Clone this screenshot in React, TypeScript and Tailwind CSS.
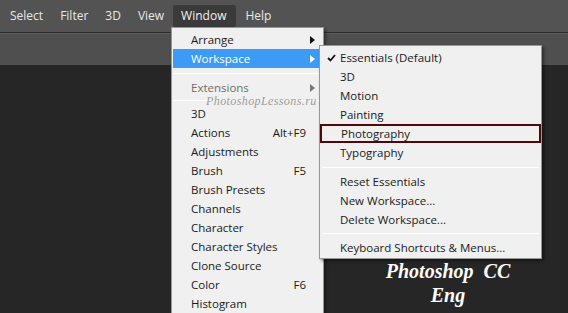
import React from 'react';

const font = { fontFamily: '"Open Sans", "Noto Sans", sans-serif' };

type Item = { label: string; shortcut?: string; arrow?: boolean; active?: boolean; disabled?: boolean; sep?: number };

const windowItems: Item[] = [
  { label: 'Arrange', arrow: true },
  { label: 'Workspace', arrow: true, active: true },
  { label: '', sep: 10 },
  { label: 'Extensions', arrow: true, disabled: true },
  { label: '', sep: 7 },
  { label: '3D' },
  { label: 'Actions', shortcut: 'Alt+F9' },
  { label: 'Adjustments' },
  { label: 'Brush', shortcut: 'F5' },
  { label: 'Brush Presets' },
  { label: 'Channels' },
  { label: 'Character' },
  { label: 'Character Styles' },
  { label: 'Clone Source' },
  { label: 'Color', shortcut: 'F6' },
  { label: 'Histogram' },
];

const workspaceItems: (Item & { checked?: boolean; boxed?: boolean })[] = [
  { label: 'Essentials (Default)', checked: true },
  { label: '3D' },
  { label: 'Motion' },
  { label: 'Painting' },
  { label: 'Photography', boxed: true },
  { label: 'Typography' },
  { label: '', sep: 10 },
  { label: 'Reset Essentials' },
  { label: 'New Workspace...' },
  { label: 'Delete Workspace...' },
  { label: '', sep: 9 },
  { label: 'Keyboard Shortcuts & Menus...' },
];

function Arrow({ color }: { color: string }) {
  return (
    <svg width="5" height="8" viewBox="0 0 5 8" className="absolute right-[7px] top-[6px]">
      <path d="M0 0 L5 4 L0 8 Z" fill={color} />
    </svg>
  );
}

function Separator({ h }: { h: number }) {
  return (
    <div className="flex items-center px-[1px]" style={{ height: h }}>
      <div className="h-px w-full bg-[#c8c8c8] border-b border-white" />
    </div>
  );
}

export default function App() {
  return (
    <div className="relative w-[568px] h-[313px] overflow-hidden bg-[#262626]" style={font}>
      {/* menu bar */}
      <div className="h-[32px] bg-[#535353] flex items-center pl-[10px] gap-[17px] text-[12px] text-[#e8e8e8]">
        <span>Select</span>
        <span>Filter</span>
        <span>3D</span>
        <span>View</span>
        <span className="-mx-[8px] pl-[8px] pr-[10px] h-[22px] flex items-center bg-[#3a3a3a] rounded-[2px] text-[#f2f2f2]">
          Window
        </span>
        <span>Help</span>
      </div>
      <div className="h-px bg-[#2b2b2b]" />
      <div className="h-[32px] bg-[#4f4f4f] border-t border-[#5e5e5e]" />

      {/* Window menu */}
      <div className="absolute left-[171px] top-[27px] w-[153px] h-[300px] bg-[#f0f0f0] border border-[#979797] pt-[2px] px-[1px] text-[11.5px] text-[#1a1a1a] shadow-[2px_2px_3px_rgba(0,0,0,0.4)]">
        {windowItems.map((it, i) =>
          it.sep ? (
            <Separator key={i} h={it.sep} />
          ) : (
            <div
              key={i}
              className={`relative h-[19px] flex items-center pl-[18px] pr-[16px] ${
                it.active ? 'bg-[#3d9bf5] text-white' : it.disabled ? 'text-[#6d6d6d]' : ''
              }`}
            >
              <span className="flex-1">{it.label}</span>
              {it.shortcut && <span>{it.shortcut}</span>}
              {it.arrow && <Arrow color={it.active ? '#ffffff' : it.disabled ? '#777777' : '#111111'} />}
            </div>
          )
        )}
        <span
          className="absolute left-[34px] top-[64px] text-[12px] italic text-[#9a9a9a] tracking-[0.4px]"
          style={{ fontFamily: '"Liberation Serif", "DejaVu Serif", serif' }}
        >
          PhotoshopLessons.ru
        </span>
      </div>

      {/* Workspace submenu */}
      <div className="absolute left-[319px] top-[45px] w-[223px] bg-[#f0f0f0] border border-[#979797] pt-[2px] pb-[1px] px-[1px] text-[11.5px] text-[#1a1a1a] shadow-[2px_2px_3px_rgba(0,0,0,0.45)]">
        {workspaceItems.map((it, i) =>
          it.sep ? (
            <Separator key={i} h={it.sep} />
          ) : (
            <div
              key={i}
              className={`relative h-[19px] flex items-center pl-[19px] ${
                it.boxed ? 'border-2 border-[#520808] pl-[17px] -mx-[1px] px-0' : ''
              }`}
            >
              {it.checked && (
                <svg width="9" height="8" viewBox="0 0 9 8" className="absolute left-[6px] top-[6px]">
                  <path d="M1 4 L3.5 6.5 L8 1" stroke="#111" strokeWidth="1.8" fill="none" />
                </svg>
              )}
              <span>{it.label}</span>
            </div>
          )
        )}
      </div>

      {/* logo text */}
      <div
        className="absolute left-[358px] top-[259px] w-[180px] flex flex-col items-center text-white font-bold italic text-[20px] leading-[24px]"
        style={{ fontFamily: '"Liberation Serif", "DejaVu Serif", serif' }}
      >
        <span className="whitespace-pre">Photoshop  CC</span>
        <span>Eng</span>
      </div>
    </div>
  );
}
